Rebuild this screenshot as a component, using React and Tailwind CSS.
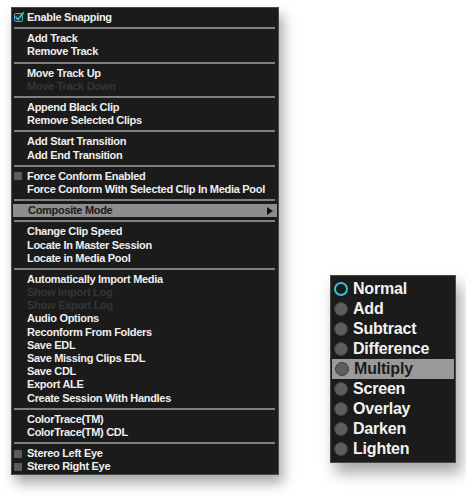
const menu = [
  { label: 'Enable Snapping', check: 'on' },
  '-',
  { label: 'Add Track' },
  { label: 'Remove Track' },
  '-',
  { label: 'Move Track Up' },
  { label: 'Move Track Down', disabled: true },
  '-',
  { label: 'Append Black Clip' },
  { label: 'Remove Selected Clips' },
  '-',
  { label: 'Add Start Transition' },
  { label: 'Add End Transition' },
  '-',
  { label: 'Force Conform Enabled', check: 'off' },
  { label: 'Force Conform With Selected Clip In Media Pool' },
  '-',
  { label: 'Composite Mode', submenu: true, active: true },
  '-',
  { label: 'Change Clip Speed' },
  { label: 'Locate In Master Session' },
  { label: 'Locate in Media Pool' },
  '-',
  { label: 'Automatically Import Media' },
  { label: 'Show Import Log', disabled: true },
  { label: 'Show Export Log', disabled: true },
  { label: 'Audio Options' },
  { label: 'Reconform From Folders' },
  { label: 'Save EDL' },
  { label: 'Save Missing Clips EDL' },
  { label: 'Save CDL' },
  { label: 'Export ALE' },
  { label: 'Create Session With Handles' },
  '-',
  { label: 'ColorTrace(TM)' },
  { label: 'ColorTrace(TM) CDL' },
  '-',
  { label: 'Stereo Left Eye', check: 'off' },
  { label: 'Stereo Right Eye', check: 'off' },
]

const modes = ['Normal', 'Add', 'Subtract', 'Difference', 'Multiply', 'Screen', 'Overlay', 'Darken', 'Lighten']

function CheckBox({ on }) {
  if (!on) {
    return <span className="absolute left-[2px] top-[2.5px] h-[8px] w-[8px] rounded-[1px] bg-[#5c5c5c]" />
  }
  return (
    <svg className="absolute left-[2px] top-[1px]" width="10" height="10" viewBox="0 0 10 10">
      <rect x="0.5" y="1.5" width="8" height="8" rx="1" fill="#2a2a2a" stroke="#39b6cc" strokeWidth="1" />
      <path d="M2 5.2 L4 7.5 L9.3 0.8" fill="none" stroke="#3ec3dc" strokeWidth="1.6" strokeLinecap="round" />
    </svg>
  )
}

function MainMenu() {
  return (
    <div className="w-[268px] border border-[#4a4a4a] bg-[#1b1b1b] pt-[3px] pb-[1px] shadow-[4px_8px_12px_rgba(0,0,0,0.35)]">
      {menu.map((item, i) => {
        if (item === '-') {
          return (
            <div key={i} className="flex h-[8px] items-center pl-[2px] pr-[3px]">
              <div className="h-[2px] w-full bg-[#808080]" />
            </div>
          )
        }
        return (
          <div
            key={i}
            className={
              'relative flex h-[13.2px] items-center pl-[15px] text-[11px] font-bold tracking-[-0.3px] ' +
              (item.active ? 'mx-[1px] bg-[#8d8d8d] text-[#1a1a1a] ' : '') +
              (item.disabled ? 'text-[#353535]' : item.active ? '' : 'text-[#efefef]')
            }
          >
            {item.check ? <CheckBox on={item.check === 'on'} /> : null}
            <span className={item.active ? 'pl-0' : ''}>{item.label}</span>
            {item.submenu ? (
              <svg className="absolute right-[4px] top-[3px]" width="6" height="8" viewBox="0 0 6 8">
                <path d="M0 0 L6 4 L0 8 Z" fill="#111" />
              </svg>
            ) : null}
          </div>
        )
      })}
    </div>
  )
}

function Radio({ selected }) {
  if (selected) {
    return <span className="h-[14px] w-[14px] shrink-0 rounded-full border-[2.5px] border-[#36c2d6] bg-[#1b1b1b]" />
  }
  return <span className="h-[14px] w-[14px] shrink-0 rounded-full border border-[#3e3e3e] bg-[#5e5e5e]" />
}

function ModeMenu() {
  return (
    <div className="w-[126px] border border-[#4a4a4a] bg-[#1b1b1b] py-[3px] shadow-[5px_10px_14px_rgba(0,0,0,0.35)]">
      {modes.map((m) => (
        <div
          key={m}
          className={
            'flex h-[20px] items-center gap-[5px] pl-[3px] text-[16px] font-bold tracking-[-0.2px] ' +
            (m === 'Multiply' ? 'mx-[1px] bg-[#9a9a9a] pl-[2px] text-[#1c1c1c]' : 'text-[#f2f2f2]')
          }
        >
          <Radio selected={m === 'Normal'} />
          <span>{m}</span>
        </div>
      ))}
    </div>
  )
}

export default function App() {
  return (
    <div
      className="flex h-[497px] w-[466px] items-start bg-white pl-[11px] pt-[7px] leading-none"
      style={{ fontFamily: '"Liberation Sans", Arial, sans-serif' }}
    >
      <MainMenu />
      <div className="ml-[51px] mt-[268px]">
        <ModeMenu />
      </div>
    </div>
  )
}
